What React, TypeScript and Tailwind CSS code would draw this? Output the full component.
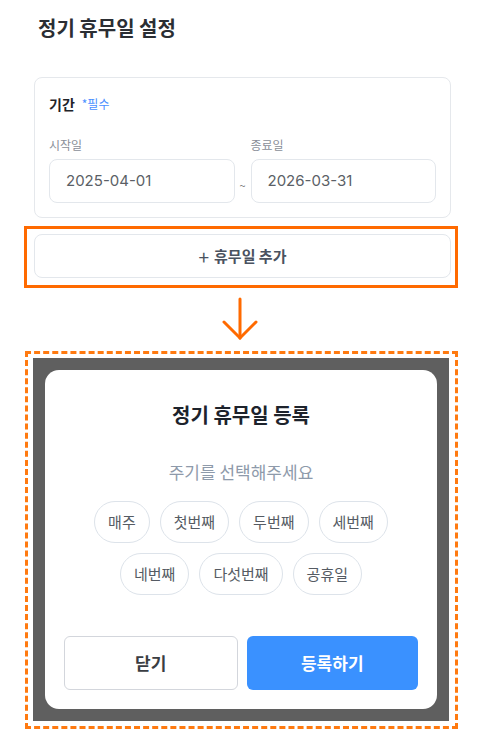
const font = { fontFamily: '"Noto Sans CJK KR", "Noto Sans", sans-serif' };

const cycles = ['매주', '첫번째', '두번째', '세번째', '네번째', '다섯번째', '공휴일'];

function DateField({ label, value }: { label: string; value: string }) {
  return (
    <div className="flex-1 flex flex-col">
      <span className="text-[12px] leading-[16px] text-[#8a8f98]">{label}</span>
      <div className="mt-[6px] h-[44px] rounded-[8px] border border-[#e3e7ec] bg-white flex items-center pl-[16px] text-[15px] text-[#5b5f66]">
        <span style={{ fontFamily: 'Inter, "Noto Sans", sans-serif' }}>{value}</span>
      </div>
    </div>
  );
}

function ArrowDown() {
  return (
    <svg width="40" height="44" viewBox="0 0 40 44" fill="none" stroke="#ff6a00" strokeWidth="3" strokeLinecap="round">
      <path d="M20 2 V41" />
      <path d="M4 25 L20 41 L36 25" />
    </svg>
  );
}

export default function App() {
  return (
    <div className="w-[484px] h-[740px] bg-white overflow-hidden" style={font}>
      <h1 className="pl-[38px] pt-[15px] text-[20px] leading-[26px] font-bold text-[#2b2e33]">정기 휴무일 설정</h1>

      <div className="mt-[36px] mx-[24px] w-[434px]">
        {/* 기간 카드 */}
        <div className="ml-[10px] mr-[7px] rounded-[8px] border border-[#e5e8ec] pt-[16px] pb-[14px] px-[14px]">
          <div className="flex items-center gap-[7px]">
            <span className="text-[14px] leading-[20px] font-bold text-[#1f2329]">기간</span>
            <span className="text-[12px] leading-[16px] text-[#4a8fff]">*필수</span>
          </div>
          <div className="mt-[23px] flex items-end">
            <DateField label="시작일" value="2025-04-01" />
            <span className="w-[16px] text-center text-[11px] text-[#777] pb-[10px]">~</span>
            <DateField label="종료일" value="2026-03-31" />
          </div>
        </div>

        {/* 휴무일 추가 강조 */}
        <div className="mt-[8px] border-[3px] border-[#ff6a00] pt-[5px] pb-[7px] pl-[7px] pr-[4px]">
          <button className="w-full h-[44px] rounded-[8px] border border-[#e3e7ec] bg-white flex items-center justify-center gap-[5px] text-[15px] font-bold text-[#4a5260]">
            <span className="text-[19px] font-normal leading-none">+</span>
            <span>휴무일 추가</span>
          </button>
        </div>

        <div className="flex justify-center mt-[9px] pr-[2px]">
          <ArrowDown />
        </div>

        {/* 등록 모달 미리보기 */}
        <div className="mt-[10px] ml-[1px] border-[3px] border-dashed border-[#ff7a10] pt-[4px] pl-[5px] pr-[6px] pb-[5px]">
          <div className="bg-[#5f5f5f] px-[12px] pt-[12px] pb-[12px]">
            <div className="bg-white rounded-[14px] px-[19px] pt-[31px] pb-[19px] flex flex-col items-center">
              <h2 className="text-[20px] leading-[28px] font-bold text-[#1d232c]">정기 휴무일 등록</h2>
              <p className="mt-[32px] text-[17px] leading-[22px] text-[#8e9aaa]">주기를 선택해주세요</p>
              <div className="mt-[18px] flex flex-wrap justify-center gap-[10px] w-full">
                {cycles.map((c) => (
                  <button
                    key={c}
                    className="h-[42px] px-[13px] rounded-full border border-[#dde3ea] bg-white text-[15px] text-[#555b63]"
                  >
                    {c}
                  </button>
                ))}
              </div>
              <div className="mt-[41px] flex gap-[9px] w-full">
                <button className="flex-1 h-[54px] rounded-[6px] border border-[#d3d6dc] bg-white text-[17px] font-bold text-[#3a3d42]">
                  닫기
                </button>
                <button className="flex-1 h-[54px] rounded-[6px] bg-[#3a91ff] text-[17px] font-bold text-white">
                  등록하기
                </button>
              </div>
            </div>
          </div>
        </div>
      </div>
    </div>
  );
}
